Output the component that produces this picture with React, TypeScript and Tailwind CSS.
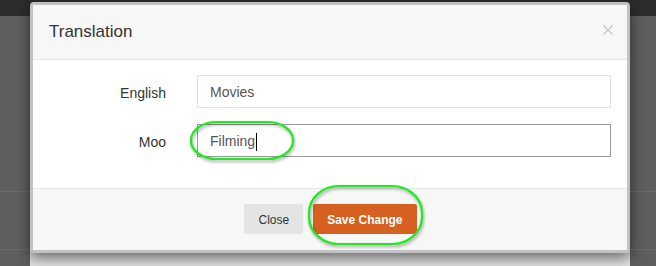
export default function App() {
  return (
    <div className="relative h-[266px] w-[656px] overflow-hidden bg-[#5e5e5e] font-['Liberation_Sans',Arial,sans-serif]">
      {/* page behind the backdrop */}
      <div className="flex h-full flex-col">
        <div className="h-4 shrink-0 bg-[#2c2c2c]" />
        <div className="h-[175px] shrink-0" />
        <div className="h-px shrink-0 bg-[#6b6b6b]" />
        <div className="h-[57px] shrink-0" />
        <div className="h-px shrink-0 bg-[#6b6b6b]" />
        <div className="flex flex-1">
          <div className="w-[30px]" />
          <div className="w-[600px] bg-[#e2e2e2]" />
        </div>
      </div>

      {/* modal */}
      <div className="absolute left-[30px] top-[2px] flex h-[251px] w-[600px] flex-col overflow-hidden rounded-[4px] border-[3px] border-[#c2c2c2] bg-white shadow-[0_5px_14px_rgba(0,0,0,0.55)]">
        <div className="flex h-[55px] shrink-0 items-center justify-between border-b border-[#e5e5e5] bg-[#f7f7f7] pl-4 pr-[14px]">
          <h4 className="text-[17px] text-[#333]">Translation</h4>
          <svg width="10" height="10" viewBox="0 0 10 10" className="mb-[4px]">
            <path d="M0.5 0.5 L9.5 9.5 M9.5 0.5 L0.5 9.5" stroke="#c6c6c6" strokeWidth="1.3" />
          </svg>
        </div>

        <div className="flex h-[128px] shrink-0 flex-col gap-4 pb-[31px] pr-4 pt-[15px]">
          <div className="flex items-center">
            <label className="w-[133px] pt-[3px] text-right text-[14px] text-[#333]">English</label>
            <div className="ml-[31px] flex h-[33px] flex-1 items-center border border-[#e3e3e3] pl-3 pt-[2px] text-[14px] text-[#555]">
              Movies
            </div>
          </div>
          <div className="flex items-center">
            <label className="w-[133px] pt-[3px] text-right text-[14px] text-[#333]">Moo</label>
            <div className="ml-[31px] flex h-[33px] flex-1 items-center border border-[#999] pl-3 pt-[2px] text-[14px] text-[#555]">
              Filming
              <span className="ml-px h-[18px] w-px bg-black" />
            </div>
          </div>
        </div>

        <div className="flex flex-1 items-center justify-center gap-[10px] border-t border-[#e5e5e5] bg-[#f7f7f7] pb-px pl-px">
          <button className="h-[30px] rounded-[2px] bg-[#e4e4e4] px-[14px] pt-px text-[12px] text-[#333]">Close</button>
          <button className="h-[30px] rounded-[2px] bg-[#d6601f] px-[14px] pt-px text-[12px] font-bold text-white">Save Change</button>
        </div>
      </div>

      {/* green annotation marks */}
      <svg
        width="656"
        height="266"
        className="pointer-events-none absolute left-0 top-0 drop-shadow-[1px_2px_1.5px_rgba(0,0,0,0.35)]"
      >
        <rect x="191" y="122" width="102" height="37" rx="26" ry="18" fill="none" stroke="#1eea1e" strokeWidth="2.2" />
        <rect x="309" y="186" width="113" height="58" rx="30" ry="27" fill="none" stroke="#1eea1e" strokeWidth="2.2" />
      </svg>
    </div>
  );
}
